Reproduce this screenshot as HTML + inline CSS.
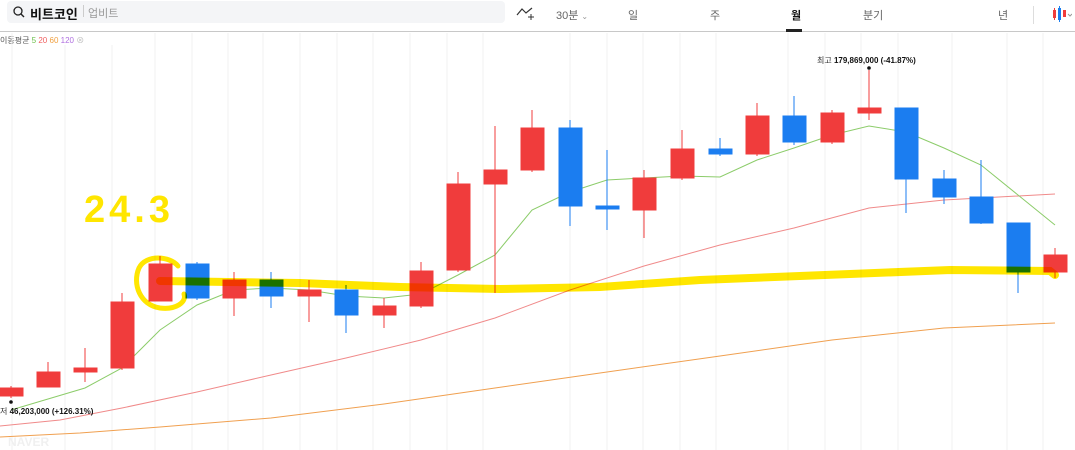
<!DOCTYPE html>
<html><head><meta charset="utf-8"><style>
body{margin:0;width:1075px;height:450px;overflow:hidden;background:#fff;font-family:"Liberation Sans","Noto Sans CJK KR",sans-serif;position:relative}
.hdr{position:absolute;left:0;top:0;width:1075px;height:31px;border-bottom:1px solid #c8c8c8}
.search{position:absolute;left:7px;top:1px;width:498px;height:22px;background:#f4f5f7;border-radius:4px}
.t{position:absolute;top:7px;font-size:11px;color:#666}
</style></head><body>
<div class="hdr">
 <div class="search">
  <svg style="position:absolute;left:6px;top:5px" width="12" height="12" viewBox="0 0 12 12"><circle cx="5" cy="5" r="4" fill="none" stroke="#222" stroke-width="1.3"/><line x1="8" y1="8" x2="11" y2="11" stroke="#222" stroke-width="1.4"/></svg>
  <span style="position:absolute;left:23px;top:3px;font-size:13px;font-weight:bold;color:#111">비트코인</span>
  <span style="position:absolute;left:76px;top:4px;width:1px;height:12px;background:#ccc"></span>
  <span style="position:absolute;left:81px;top:4px;font-size:11px;color:#999">업비트</span>
 </div>
 <svg style="position:absolute;left:516px;top:5px" width="20" height="16" viewBox="0 0 20 16"><polyline points="1,10 6,4 10,8 16,3" fill="none" stroke="#333" stroke-width="1.2"/><line x1="15" y1="9" x2="15" y2="15" stroke="#333"/><line x1="12" y1="12" x2="18" y2="12" stroke="#333"/></svg>
 <span class="t" style="left:556px">30분 <span style="font-size:8px;color:#999">⌄</span></span>
 <span class="t" style="left:628px">일</span>
 <span class="t" style="left:710px">주</span>
 <span class="t" style="left:791px;color:#111;font-weight:bold">월</span>
 <div style="position:absolute;left:786px;top:29px;width:16px;height:3px;background:#222"></div>
 <span class="t" style="left:863px">분기</span>
 <span class="t" style="left:998px">년</span>
 <div style="position:absolute;left:1033px;top:6px;width:1px;height:18px;background:#ddd"></div>
 <svg style="position:absolute;left:1052px;top:5px" width="20" height="18" viewBox="0 0 20 18"><rect x="1" y="5" width="3" height="8" fill="#f03c3c"/><line x1="2.5" y1="3" x2="2.5" y2="15" stroke="#f03c3c"/><rect x="6" y="3" width="3" height="12" fill="#1b7df0"/><line x1="7.5" y1="1" x2="7.5" y2="17" stroke="#1b7df0"/><rect x="11" y="5" width="3" height="7" fill="#f03c3c"/><path d="M16 9l2 2 2-2" fill="none" stroke="#999"/></svg>
</div>
<div style="position:absolute;left:0;top:35px;font-size:8px;color:#555">이동평균 <span style="color:#6cc04a">5</span> <span style="color:#f06060">20</span> <span style="color:#f0a040">60</span> <span style="color:#b070e0">120</span> <span style="color:#bbb">⊗</span></div>
<svg style="position:absolute;left:0;top:0" width="1075" height="450" viewBox="0 0 1075 450">
<g stroke="#f2f2f2" stroke-width="1">
<line x1="12" y1="33" x2="12" y2="450"/><line x1="65" y1="45" x2="65" y2="450"/><line x1="112" y1="45" x2="112" y2="450"/><line x1="155" y1="33" x2="155" y2="450"/><line x1="192" y1="33" x2="192" y2="450"/><line x1="228" y1="33" x2="228" y2="450"/><line x1="263" y1="33" x2="263" y2="450"/><line x1="300" y1="33" x2="300" y2="450"/><line x1="337" y1="33" x2="337" y2="450"/><line x1="373" y1="33" x2="373" y2="450"/><line x1="410" y1="33" x2="410" y2="450"/><line x1="447" y1="33" x2="447" y2="450"/><line x1="483" y1="33" x2="483" y2="450"/><line x1="570" y1="33" x2="570" y2="450"/><line x1="607" y1="33" x2="607" y2="450"/><line x1="643" y1="33" x2="643" y2="450"/><line x1="680" y1="33" x2="680" y2="450"/><line x1="716" y1="33" x2="716" y2="450"/><line x1="788" y1="33" x2="788" y2="450"/><line x1="825" y1="33" x2="825" y2="450"/><line x1="861" y1="33" x2="861" y2="450"/><line x1="898" y1="33" x2="898" y2="450"/><line x1="952" y1="33" x2="952" y2="450"/><line x1="1007" y1="33" x2="1007" y2="450"/><line x1="1043" y1="33" x2="1043" y2="450"/>
</g>
<polyline fill="none" stroke="#f08a8a" stroke-width="1" points="0,426 60,420 122,408 197,392 271,375 346,358 421,340 495,318 570,290 644,266 720,245 794,228 869,208 944,200 1055,194"/>
<polyline fill="none" stroke="#f0a050" stroke-width="1" points="0,437 80,433 160,427 271,418 384,404 495,388 607,372 720,356 832,340 944,328 1055,323"/>
<polyline fill="none" stroke="#8ccc6a" stroke-width="1" points="11,410 85,388 122,368 160,330 197,305 234,290 271,288 309,290 346,296 384,298 421,294 458,275 495,255 532,210 570,192 607,180 644,178 682,176 720,177 757,160 794,148 832,135 869,126 906,132 944,148 981,165 1018,195 1055,225"/>
<g stroke="#f03c3c" fill="#f03c3c">
<line x1="11" y1="386" x2="11" y2="398"/><rect x="0" y="388" width="23" height="8"/>
<line x1="48" y1="362" x2="48" y2="387"/><rect x="37" y="372" width="23" height="15"/>
<line x1="85" y1="348" x2="85" y2="382"/><rect x="74" y="368" width="23" height="4"/>
<line x1="122" y1="293" x2="122" y2="370"/><rect x="111" y="302" width="23" height="66"/>
<line x1="160" y1="256" x2="160" y2="301"/><rect x="149" y="264" width="23" height="37"/>
<line x1="234" y1="272" x2="234" y2="316"/><rect x="223" y="280" width="23" height="18"/>
<line x1="309" y1="280" x2="309" y2="322"/><rect x="298" y="290" width="23" height="6"/>
<line x1="384" y1="298" x2="384" y2="328"/><rect x="373" y="306" width="23" height="9"/>
<line x1="421" y1="262" x2="421" y2="308"/><rect x="410" y="271" width="23" height="35"/>
<line x1="458" y1="172" x2="458" y2="272"/><rect x="447" y="184" width="23" height="86"/>
<line x1="495" y1="126" x2="495" y2="293"/><rect x="484" y="170" width="23" height="14"/>
<line x1="532" y1="110" x2="532" y2="172"/><rect x="521" y="128" width="23" height="42"/>
<line x1="644" y1="170" x2="644" y2="238"/><rect x="633" y="178" width="23" height="32"/>
<line x1="682" y1="130" x2="682" y2="180"/><rect x="671" y="149" width="23" height="29"/>
<line x1="757" y1="103" x2="757" y2="156"/><rect x="746" y="116" width="23" height="38"/>
<line x1="832" y1="110" x2="832" y2="144"/><rect x="821" y="113" width="23" height="29"/>
<line x1="869" y1="70" x2="869" y2="120"/><rect x="858" y="108" width="23" height="5"/>
<line x1="1055" y1="248" x2="1055" y2="278"/><rect x="1044" y="255" width="23" height="17"/>
</g>
<g stroke="#1b7df0" fill="#1b7df0">
<line x1="197" y1="262" x2="197" y2="300"/><rect x="186" y="264" width="23" height="34"/>
<line x1="271" y1="272" x2="271" y2="308"/><rect x="260" y="280" width="23" height="16"/>
<line x1="346" y1="285" x2="346" y2="333"/><rect x="335" y="290" width="23" height="25"/>
<line x1="570" y1="120" x2="570" y2="226"/><rect x="559" y="128" width="23" height="78"/>
<line x1="607" y1="150" x2="607" y2="230"/><rect x="596" y="206" width="23" height="3"/>
<line x1="720" y1="138" x2="720" y2="156"/><rect x="709" y="149" width="23" height="5"/>
<line x1="794" y1="96" x2="794" y2="145"/><rect x="783" y="116" width="23" height="26"/>
<line x1="906" y1="108" x2="906" y2="213"/><rect x="895" y="108" width="23" height="71"/>
<line x1="944" y1="170" x2="944" y2="204"/><rect x="933" y="179" width="23" height="18"/>
<line x1="981" y1="160" x2="981" y2="224"/><rect x="970" y="197" width="23" height="26"/>
<line x1="1018" y1="223" x2="1018" y2="293"/><rect x="1007" y="223" width="23" height="49"/>
</g>
<g style="mix-blend-mode:multiply">
<polyline fill="none" stroke="#ffe600" stroke-width="8" stroke-linecap="round" points="160,281 300,283 400,287 500,289 600,287 700,280 850,274 950,270 1050,271 1055,275"/>
<path d="M178,266 C170,256 146,254 139,268 C132,284 140,305 160,308 C176,310 187,302 184,294" fill="none" stroke="#ffe600" stroke-width="5" stroke-linecap="round"/>
</g>
<circle cx="869" cy="68" r="1.8" fill="#111"/>
<circle cx="11" cy="402" r="1.8" fill="#111"/>
<text x="817" y="63" font-size="8" fill="#333" font-family="Liberation Sans,Noto Sans CJK KR,sans-serif">최고 <tspan font-weight="bold" fill="#111">179,869,000 (-41.87%)</tspan></text>
<text x="0" y="414" font-size="8" fill="#333" font-family="Liberation Sans,Noto Sans CJK KR,sans-serif">저 <tspan font-weight="bold" fill="#111">46,203,000 (+126.31%)</tspan></text>
<text x="8" y="446" font-size="12" font-weight="bold" fill="#f0f0f0" font-family="Liberation Sans,sans-serif">NAVER</text>
<text x="84" y="222" font-size="38" font-weight="bold" fill="#ffe600" font-family="Liberation Sans,sans-serif" letter-spacing="4">24.3</text>
</svg>
</body></html>
